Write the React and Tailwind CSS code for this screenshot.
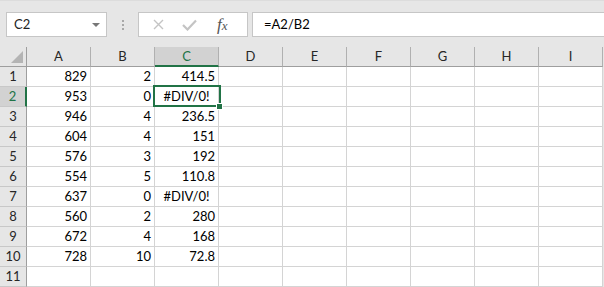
import React from 'react';

const cols = ['A', 'B', 'C', 'D', 'E', 'F', 'G', 'H', 'I'];

// [A, B, C] per riga
const data = [
  [829, 2, '414.5'],
  [953, 0, '#DIV/0!'],
  [946, 4, '236.5'],
  [604, 4, '151'],
  [576, 3, '192'],
  [554, 5, '110.8'],
  [637, 0, '#DIV/0!'],
  [560, 2, '280'],
  [672, 4, '168'],
  [728, 10, '72.8'],
  [null, null, null],
];

function Cell({ value, col, row }) {
  const isError = typeof value === 'string' && value.startsWith('#');
  const selected = col === 'C' && row === 2;
  return (
    <div
      className={`relative h-[20px] border-r border-b border-[#d4d4d4] bg-white text-[13px] leading-[19px] text-black ${
        isError ? 'text-center' : 'text-right pr-[3px]'
      }`}
    >
      {value}
      {selected && (
        <>
          <div className="absolute z-10 -left-[2px] -top-[2px] w-[68px] h-[22px] border-2 border-[#217346] pointer-events-none" />
          <div className="absolute z-20 left-[61px] top-[16px] w-[7px] h-[7px] bg-[#217346] border border-white" />
        </>
      )}
    </div>
  );
}

export default function App() {
  return (
    <div className="w-[604px] h-[287px] overflow-hidden bg-[#e6e6e6] font-['Lato','Liberation_Sans',sans-serif]">
      {/* barra formula */}
      <div className="h-[47px] flex items-start pt-[11px] pl-[6px] border-t border-[#dcdcdc]">
        <div className="w-[101px] h-[25px] bg-white border border-[#c6c6c6] flex items-center pl-[7px] pr-[6px] text-[13px] text-[#222]">
          <span className="flex-1">C2</span>
          <span className="w-0 h-0 border-l-[4px] border-r-[4px] border-t-[4px] border-l-transparent border-r-transparent border-t-[#777]" />
        </div>
        <div className="w-[31px] h-[25px] flex flex-col items-center justify-center gap-[2px]">
          <span className="w-[2px] h-[2px] bg-[#a8a8a8]" />
          <span className="w-[2px] h-[2px] bg-[#a8a8a8]" />
          <span className="w-[2px] h-[2px] bg-[#a8a8a8]" />
        </div>
        <div className="w-[110px] h-[25px] bg-white border border-[#c6c6c6] flex items-center pl-[14px]">
          <svg width="11" height="11" viewBox="0 0 11 11" className="mr-[18px]">
            <path d="M1 1 L10 10 M10 1 L1 10" stroke="#c4c4c4" strokeWidth="1.4" />
          </svg>
          <svg width="15" height="12" viewBox="0 0 15 12" className="mr-[20px]">
            <path d="M1 6 L5.5 10.5 L14 1.5" stroke="#c4c4c4" strokeWidth="2.2" fill="none" />
          </svg>
          <span className="font-['Liberation_Serif',serif] italic text-[17px] text-[#555] leading-none">
            f<span className="text-[13px]">x</span>
          </span>
        </div>
        <div className="ml-[4px] flex-1 h-[25px] bg-white border border-[#c6c6c6] border-r-0 flex items-center pl-[11px] text-[13px] text-black">
          =A2/B2
        </div>
      </div>

      {/* griglia */}
      <div className="grid grid-cols-[27px_repeat(9,64px)]">
        <div className="relative h-[20px] border-r border-b border-[#9e9e9e] bg-[#e6e6e6]">
          <svg width="12" height="12" viewBox="0 0 12 12" className="absolute right-[3px] bottom-[3px]">
            <path d="M12 0 L12 12 L0 12 Z" fill="#b4b4b4" />
          </svg>
        </div>
        {cols.map((c) => (
          <div
            key={c}
            className={`h-[20px] border-r border-[#b0b0b0] text-center text-[13px] leading-[19px] ${
              c === 'C'
                ? 'bg-[#d2d2d2] text-[#217346] border-b-2 border-b-[#217346]'
                : 'bg-[#e6e6e6] text-[#262626] border-b border-b-[#9e9e9e]'
            }`}
          >
            {c}
          </div>
        ))}

        {data.map((r, i) => {
          const row = i + 1;
          return (
            <React.Fragment key={row}>
              <div
                className={`h-[20px] border-b border-[#c8c8c8] text-center text-[13px] leading-[19px] ${
                  row === 2
                    ? 'bg-[#d2d2d2] text-[#217346] border-r-2 border-r-[#217346]'
                    : 'bg-[#e6e6e6] text-[#262626] border-r border-r-[#9e9e9e]'
                }`}
              >
                {row}
              </div>
              {cols.map((c, j) => (
                <Cell key={c} col={c} row={row} value={j < 3 ? r[j] : null} />
              ))}
            </React.Fragment>
          );
        })}
      </div>
    </div>
  );
}
